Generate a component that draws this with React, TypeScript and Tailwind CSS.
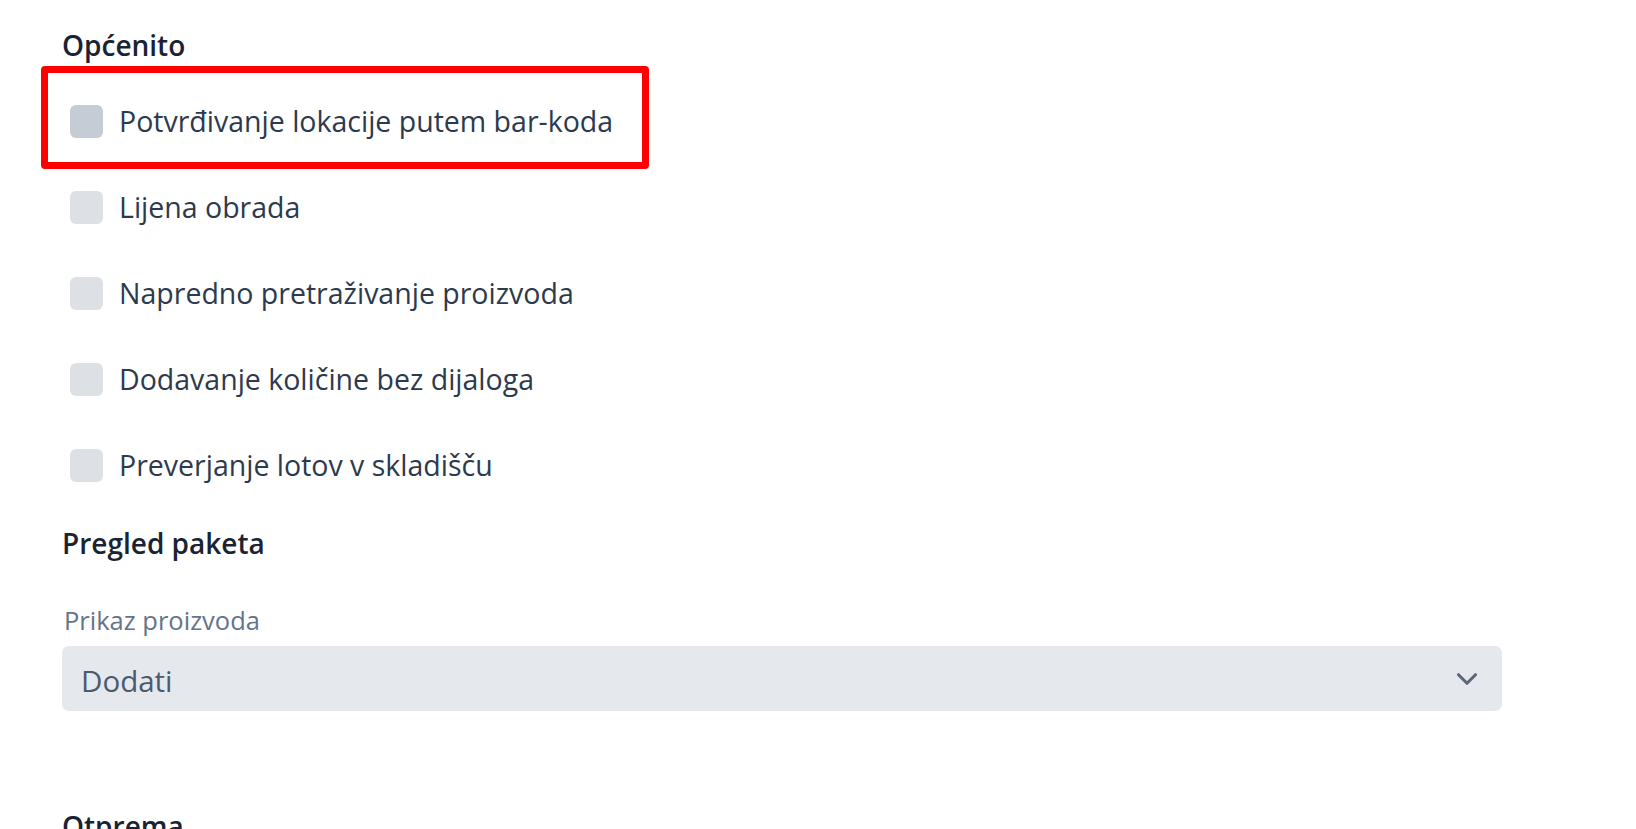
import { ChevronDown } from "lucide-react";

const options = [
  "Potvrđivanje lokacije putem bar-koda",
  "Lijena obrada",
  "Napredno pretraživanje proizvoda",
  "Dodavanje količine bez dijaloga",
  "Preverjanje lotov v skladišču",
];

function CheckRow({ label, active }: { label: string; active?: boolean }) {
  return (
    <label className="flex h-[86px] items-center gap-[16px] pl-[8px]">
      <span
        className={
          "h-[33px] w-[33px] shrink-0 rounded-[6px] " +
          (active ? "bg-[#c5ccd5]" : "bg-[#dde1e6]")
        }
      />
      <span className="text-[28.5px] leading-none text-[#2d3a4d]">{label}</span>
    </label>
  );
}

export default function App() {
  return (
    <div className="h-[829px] overflow-hidden bg-white font-['Open_Sans',sans-serif]">
      <div className="pl-[62px] pr-[134px] pt-[27px]">
        <h2 className="text-[28px] font-semibold leading-[36px] text-[#1a2333]">
          Općenito
        </h2>

        <div className="relative mt-[15px]">
          <div className="pointer-events-none absolute -left-[21px] top-[-12px] h-[103px] w-[608px] rounded-[4px] border-[7px] border-[#ff0000]" />
          {options.map((o, i) => (
            <CheckRow key={o} label={o} active={i === 0} />
          ))}
        </div>

        <h2 className="mt-[17px] text-[28px] font-semibold leading-[36px] text-[#1a2333]">
          Pregled paketa
        </h2>

        <div className="mt-[45px] flex flex-col gap-[12px]">
          <span className="pl-[2px] text-[25.5px] leading-[28px] text-[#64748b]">
            Prikaz proizvoda
          </span>
          <div className="flex h-[65px] items-center justify-between rounded-[7px] bg-[#e5e8ed] pl-[19px] pr-[18px]">
            <span className="pt-[5px] text-[29.5px] font-medium text-[#4b5a6e]">
              Dodati
            </span>
            <ChevronDown className="h-[34px] w-[34px] text-[#5b6679]" strokeWidth={2.2} />
          </div>
        </div>

        <h2 className="mt-[97px] text-[28px] font-semibold leading-[36px] text-[#1a2333]">
          Otprema
        </h2>
      </div>
    </div>
  );
}
